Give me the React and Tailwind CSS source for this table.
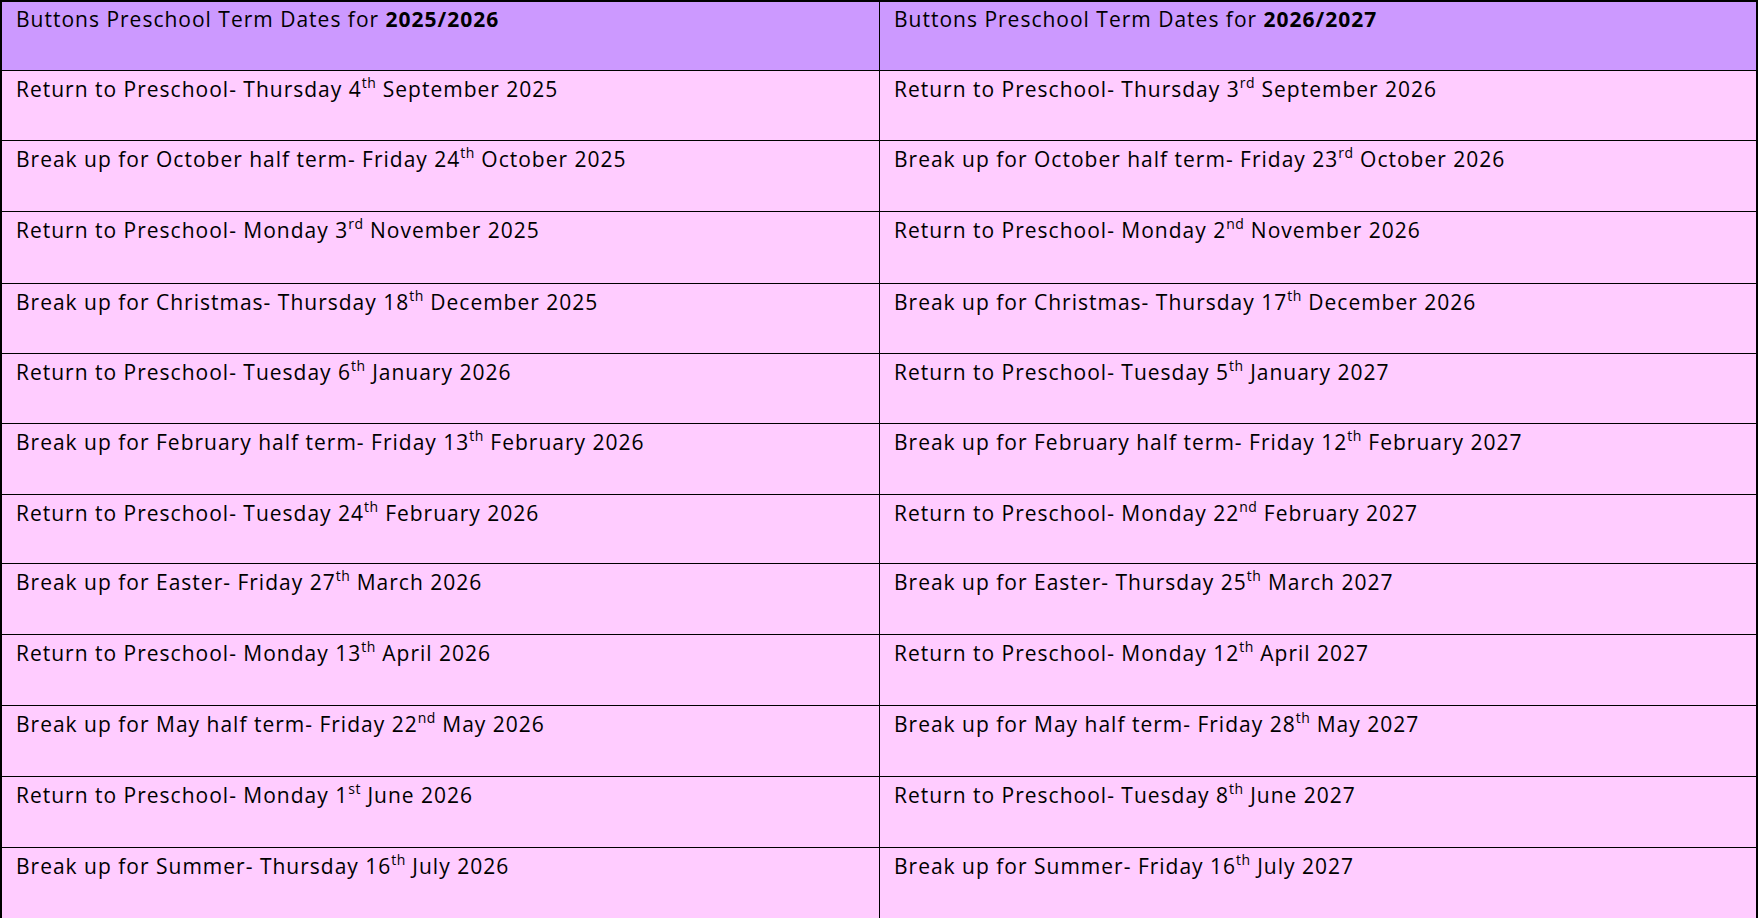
import React from "react";

const rows = [
    [["Return to Preschool- Thursday 4", "th", " September 2025"], ["Return to Preschool- Thursday 3", "rd", " September 2026"]],
    [["Break up for October half term- Friday 24", "th", " October 2025"], ["Break up for October half term- Friday 23", "rd", " October 2026"]],
    [["Return to Preschool- Monday 3", "rd", " November 2025"], ["Return to Preschool- Monday 2", "nd", " November 2026"]],
    [["Break up for Christmas- Thursday 18", "th", " December 2025"], ["Break up for Christmas- Thursday 17", "th", " December 2026"]],
    [["Return to Preschool- Tuesday 6", "th", " January 2026"], ["Return to Preschool- Tuesday 5", "th", " January 2027"]],
    [["Break up for February half term- Friday 13", "th", " February 2026"], ["Break up for February half term- Friday 12", "th", " February 2027"]],
    [["Return to Preschool- Tuesday 24", "th", " February 2026"], ["Return to Preschool- Monday 22", "nd", " February 2027"]],
    [["Break up for Easter- Friday 27", "th", " March 2026"], ["Break up for Easter- Thursday 25", "th", " March 2027"]],
    [["Return to Preschool- Monday 13", "th", " April 2026"], ["Return to Preschool- Monday 12", "th", " April 2027"]],
    [["Break up for May half term- Friday 22", "nd", " May 2026"], ["Break up for May half term- Friday 28", "th", " May 2027"]],
    [["Return to Preschool- Monday 1", "st", " June 2026"], ["Return to Preschool- Tuesday 8", "th", " June 2027"]],
    [["Break up for Summer- Thursday 16", "th", " July 2026"], ["Break up for Summer- Friday 16", "th", " July 2027"]],
];

const heights = ["h-[70px]", "h-[71px]", "h-[72px]", "h-[70px]", "h-[70px]", "h-[71px]", "h-[69px]", "h-[71px]", "h-[71px]", "h-[71px]", "h-[71px]", "h-[120px]"];

const Cell = ({ parts, first }) => (
    <div className={`pl-[14px] pt-[3px] ${first ? "border-r border-black" : ""}`}>
        {parts[0]}
        <sup className="text-[14px] tracking-[0.5px] top-[-9px]">{parts[1]}</sup>
        {parts[2]}
    </div>
);

const App = () => {
    return (
        <div className="w-[1759px] h-[918px] overflow-hidden bg-white text-black text-[21px] leading-[30px] tracking-[1px] font-['Open_Sans',sans-serif]">
            <div className="w-[1758px] border-l-2 border-t-2 border-r-2 border-black">
                <div className="grid grid-cols-[878px_1fr] h-[69px] bg-[#cc99ff] border-b border-black">
                    <div className="pl-[14px] pt-[2px] border-r border-black">
                        Buttons Preschool Term Dates for <span className="font-bold">2025/2026</span>
                    </div>
                    <div className="pl-[14px] pt-[2px]">
                        Buttons Preschool Term Dates for <span className="font-bold">2026/2027</span>
                    </div>
                </div>
                {rows.map((row, i) => (
                    <div key={i} className={`grid grid-cols-[878px_1fr] bg-[#ffccff] border-b border-black ${heights[i]}`}>
                        <Cell parts={row[0]} first />
                        <Cell parts={row[1]} />
                    </div>
                ))}
            </div>
        </div>
    );
};

export default App;
